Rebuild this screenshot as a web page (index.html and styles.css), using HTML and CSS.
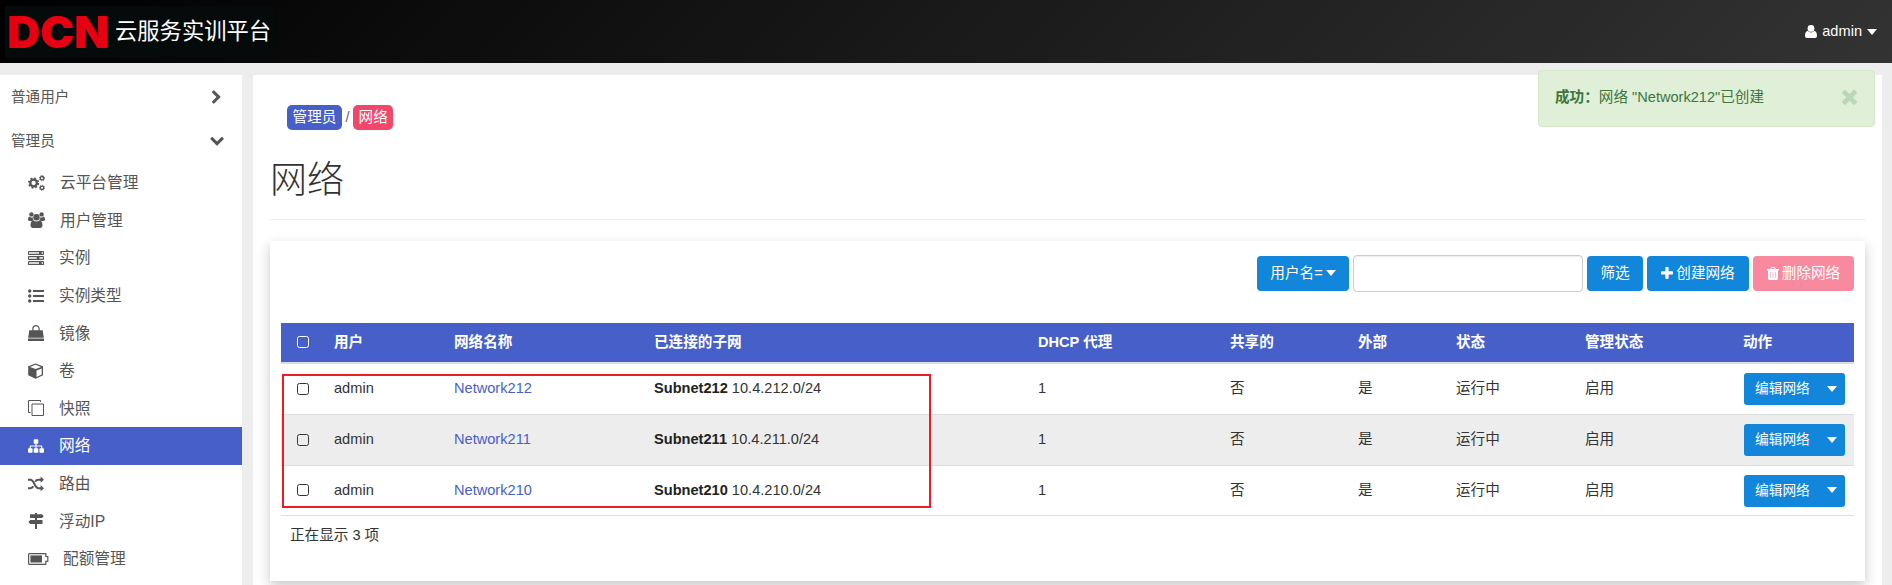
FILE: index.html
```html
<!DOCTYPE html>
<html lang="zh-CN">
<head>
<meta charset="utf-8">
<title>网络</title>
<link rel="stylesheet" href="styles.css">
</head>
<body>
<header class="topbar">
  <div class="brand"><span class="brand-mark">DCN</span><span class="brand-name">云服务实训平台</span></div>
  <div class="user-menu">
    <svg class="user-icon" viewBox="0 0 12 13"><circle cx="6" cy="3.4" r="3.4"/><path d="M2.6 5.8Q6 9.2 9.4 5.8Q12 6.6 12 11Q12 13 10 13H2Q0 13 0 11Q0 6.6 2.6 5.8z"/></svg>
    <span>admin</span><i class="caret"></i>
  </div>
</header>
<div class="page">
  <nav class="sidebar">
    <div class="group"><span>普通用户</span><svg class="chev" viewBox="0 0 1792 1792"><path d="M1363 877l-742 742q-19 19-45 19t-45-19l-166-166q-19-19-19-45t19-45l531-531-531-531q-19-19-19-45t19-45l166-166q19-19 45-19t45 19l742 742q19 19 19 45t-19 45z"/></svg></div>
    <div class="group"><span>管理员</span><svg class="chev down" viewBox="0 0 1792 1792"><path d="M1363 877l-742 742q-19 19-45 19t-45-19l-166-166q-19-19-19-45t19-45l531-531-531-531q-19-19-19-45t19-45l166-166q19-19 45-19t45 19l742 742q19 19 19 45t-19 45z"/></svg></div>
    <ul class="menu">
      <li><svg class="ico ico-17" viewBox="0 0 17 16"><g fill="none" stroke="currentColor"><circle cx="5.6" cy="8" r="3.3" stroke-width="2.3"/><circle cx="5.6" cy="8" r="4.8" stroke-width="1.7" stroke-dasharray="1.885"/><circle cx="14" cy="3.2" r="1.7" stroke-width="1.3"/><circle cx="14" cy="3.2" r="2.6" stroke-width="1" stroke-dasharray="1.02"/><circle cx="14" cy="12.8" r="1.7" stroke-width="1.3"/><circle cx="14" cy="12.8" r="2.6" stroke-width="1" stroke-dasharray="1.02"/></g></svg><span>云平台管理</span></li>
      <li><svg class="ico ico-17" viewBox="0 0 17 16"><circle cx="3.4" cy="2.4" r="2.2"/><circle cx="13.6" cy="2.4" r="2.2"/><circle cx="8.5" cy="5.2" r="3.2"/><path d="M1.2 4.6Q3.4 6.4 4.6 5Q4.6 7 5.6 8.1Q4.6 8.1 3.8 9.1H1.6Q0 9.1 0 7.6Q0 5 1.2 4.6zM15.8 4.6Q13.6 6.4 12.4 5Q12.4 7 11.4 8.1Q12.4 8.1 13.2 9.1H15.4Q17 9.1 17 7.6Q17 5 15.8 4.6zM5.4 8.3Q8.5 10.8 11.6 8.3Q14.5 8.8 14.5 13.6Q14.5 16 12.3 16H4.7Q2.5 16 2.5 13.6Q2.5 8.8 5.4 8.3z"/></svg><span>用户管理</span></li>
      <li><svg class="ico" viewBox="0 0 16 16"><path fill-opacity=".25" d="M0 1.500h16v3H0zM0 6.500h16v3H0zM0 11.500h16v3H0z"/><path fill="none" stroke="currentColor" stroke-width="1" d="M.5 1.500h15v3H.5zM.5 6.500h15v3H.5zM.5 11.500h15v3H.5z"/><path d="M11 2h2.600v2H11zM8.800 7h2.600v2H8.800zM11 12h2.600v2H11z"/></svg><span>实例</span></li>
      <li><svg class="ico" viewBox="0 0 16 16"><circle cx="1.7" cy="3" r="1.7"/><circle cx="1.7" cy="8" r="1.7"/><circle cx="1.7" cy="13" r="1.7"/><path d="M5 2h11v2H5zM5 7h11v2H5zM5 12h11v2H5z"/></svg><span>实例类型</span></li>
      <li><svg class="ico" viewBox="0 0 16 16"><path d="M1.3 5.2h13.4l1.1 7.500H.2zM0 13.400h16V16H0z"/><path fill="none" stroke="currentColor" stroke-width="1.200" d="M4.900 7.200V3.800a3.100 3.100 0 0 1 6.200 0v3.400"/></svg><span>镜像</span></li>
      <li><svg class="ico" viewBox="0 0 16 16"><path fill-rule="evenodd" d="M7.600.5L15 3.300V12.200L7.600 15.800L.2 12.200V3.300zM7.600 1.800L2 3.900L7.600 6L13.200 3.900zM8.500 7.500V14L13.700 11.400V5.400z"/></svg><span>卷</span></li>
      <li><svg class="ico" viewBox="0 0 16 16"><path fill="none" stroke="currentColor" stroke-width="1" d="M4 4h11.500v11.500H4zM2.500 12.500H.5V.5H12.500V2"/></svg><span>快照</span></li>
      <li class="active"><svg class="ico" viewBox="0 0 1792 1792"><path d="M1792 1248v320q0 40-28 68t-68 28h-320q-40 0-68-28t-28-68v-320q0-40 28-68t68-28h96v-192h-512v192h96q40 0 68 28t28 68v320q0 40-28 68t-68 28h-320q-40 0-68-28t-28-68v-320q0-40 28-68t68-28h96v-192h-512v192h96q40 0 68 28t28 68v320q0 40-28 68t-68 28h-320q-40 0-68-28t-28-68v-320q0-40 28-68t68-28h96v-192q0-52 38-90t90-38h512v-192h-96q-40 0-68-28t-28-68v-320q0-40 28-68t68-28h320q40 0 68 28t28 68v320q0 40-28 68t-68 28h-96v192h512q52 0 90 38t38 90v192h96q40 0 68 28t28 68z"/></svg><span>网络</span></li>
      <li><svg class="ico" viewBox="0 0 16 16"><path fill="none" stroke="currentColor" stroke-width="2" d="M0 3.700h2.200C6.800 3.700 6.200 12.200 10.400 12.200H13M0 12.200h2.200Q4.400 12.200 5.300 10.300M7.300 5.600Q8.200 3.700 10.400 3.700H13"/><path d="M12.600.6L16 3.700L12.600 6.800zM12.600 9.100L16 12.200L12.600 15.300z"/></svg><span>路由</span></li>
      <li><svg class="ico" viewBox="0 0 16 16"><path d="M7 0h2v1.300H7zM2 1.300h12l1.700 1.900L14 5.100H2zM7 5.100h2v2H7zM2.200 7.100H14.500v3.800H2.200L.4 9zM7 10.900h2V16H7z"/></svg><span>浮动IP</span></li>
      <li class="battery"><svg class="ico ico-21" viewBox="0 0 21 16"><path fill="none" stroke="currentColor" stroke-width="1.200" d="M1.600 2.600h16.200v2.900h2v4.800h-2v3H1.600q-1 0-1-1V3.600q0-1 1-1z"/><path d="M2.400 4.400h11.600v7.100H2.400z"/></svg><span>配额管理</span></li>
    </ul>
  </nav>
  <main class="content">
    <div class="crumbs"><a class="crumb blue">管理员</a><span class="sep">/</span><a class="crumb red">网络</a></div>
    <h1>网络</h1>
    <section class="card">
      <div class="toolbar">
        <button class="btn filter">用户名=<i class="caret"></i></button>
        <input class="search" type="text">
        <button class="btn go">筛选</button>
        <button class="btn create"><svg class="bi" viewBox="190 190 1412 1412"><path d="M1600 736v192q0 40-28 68t-68 28h-416v416q0 40-28 68t-68 28h-192q-40 0-68-28t-28-68v-416h-416q-40 0-68-28t-28-68v-192q0-40 28-68t68-28h416v-416q0-40 28-68t68-28h192q40 0 68 28t28 68v416h416q40 0 68 28t28 68z"/></svg>创建网络</button>
        <button class="btn delete"><svg class="bi" viewBox="0 0 12 13"><path fill-rule="evenodd" d="M0 2h3.200L4 .6Q4.300 0 5 0H7Q7.700 0 8 .6L8.800 2H12V3.500H11V11.600Q11 13 9.800 13H2.200Q1 13 1 11.600V3.500H0zM4.300 2H7.700L7.200 1H4.800zM3.200 5v6h.5V5zM5.750 5v6h.5V5zM8.300 5v6H8.800V5z"/></svg>删除网络</button>
      </div>
      <div class="table-wrap">
        <table>
          <colgroup><col class="c1"><col class="c2"><col class="c3"><col class="c4"><col class="c5"><col class="c6"><col class="c7"><col class="c8"><col class="c9"><col class="c10"></colgroup>
          <thead><tr><th><i class="box"></i></th><th>用户</th><th>网络名称</th><th>已连接的子网</th><th>DHCP 代理</th><th>共享的</th><th>外部</th><th>状态</th><th>管理状态</th><th>动作</th></tr></thead>
          <tbody>
            <tr><td><i class="box"></i></td><td>admin</td><td><a>Network212</a></td><td><b>Subnet212</b> 10.4.212.0/24</td><td>1</td><td>否</td><td>是</td><td>运行中</td><td>启用</td><td><div class="split"><span>编辑网络</span><i class="caret"></i></div></td></tr>
            <tr class="odd"><td><i class="box"></i></td><td>admin</td><td><a>Network211</a></td><td><b>Subnet211</b> 10.4.211.0/24</td><td>1</td><td>否</td><td>是</td><td>运行中</td><td>启用</td><td><div class="split"><span>编辑网络</span><i class="caret"></i></div></td></tr>
            <tr><td><i class="box"></i></td><td>admin</td><td><a>Network210</a></td><td><b>Subnet210</b> 10.4.210.0/24</td><td>1</td><td>否</td><td>是</td><td>运行中</td><td>启用</td><td><div class="split"><span>编辑网络</span><i class="caret"></i></div></td></tr>
          </tbody>
        </table>
        <div class="highlight"></div>
      </div>
      <p class="count">正在显示 3 项</p>
    </section>
  </main>
</div>
<div class="alert"><p><b>成功：</b>网络 "Network212"已创建</p><svg class="close" viewBox="300 380 1192 1192"><path d="M1490 1322q0 40-28 68l-136 136q-28 28-68 28t-68-28l-294-294-294 294q-28 28-68 28t-68-28l-136-136q-28-28-28-68t28-68l294-294-294-294q-28-28-28-68t28-68l136-136q28-28 68-28t68 28l294 294 294-294q28-28 68-28t68 28l136 136q28 28 28 68t-28 68l-294 294 294 294q28 28 28 68z"/></svg></div>
</body>
</html>
```
FILE: styles.css
```css
* { box-sizing: border-box; }
html, body { height: 100%; }
body {
  margin: 0;
  overflow: hidden;
  display: flex;
  flex-direction: column;
  background: #ededed;
  color: #333;
  font: 14.6px/21px "Liberation Sans", "Noto Sans CJK SC", sans-serif;
}
svg { display: block; fill: currentColor; flex: none; }
.caret {
  display: inline-block;
  border: 5px solid transparent;
  border-top: 6px solid currentColor;
  border-bottom: 0;
}

.topbar {
  flex: none;
  height: 63px;
  display: flex;
  justify-content: space-between;
  align-items: center;
  padding: 0 15px 0 5px;
  background: linear-gradient(135deg, #000, #333);
  color: #fff;
}
.brand {
  display: flex;
  align-items: center;
  width: 268px;
  height: 52px;
  padding-left: 2px;
  background: #050a0a;
}
.brand-mark {
  width: 108px;
  color: #e60012;
  font: 900 44px/52px Inter, sans-serif;
  transform: scaleX(1.035);
  transform-origin: left;
}
.brand-name { font-size: 22.3px; line-height: 53px; white-space: nowrap; }
.user-menu { display: flex; align-items: center; gap: 5px; }
.user-icon { width: 12px; height: 13px; }

.page { flex: 1; display: flex; gap: 11px; padding: 12px 10px 0 0; min-height: 0; }
.sidebar { width: 242px; background: #fff; color: #555; overflow: hidden; }
.group {
  display: flex;
  justify-content: space-between;
  align-items: center;
  height: 44px;
  padding: 0 18px 0 11px;
}
.chev { width: 15px; height: 15px; }
.down { transform: rotate(90deg); }
.menu { list-style: none; margin: 1px 0 0; padding: 0; font-size: 15.7px; }
.menu li {
  display: flex;
  align-items: center;
  gap: 15px;
  height: 37.6px;
  padding-left: 28px;
}
.menu li.active { background: #475fc8; color: #fff; }
.ico { width: 16px; height: 16px; }
.ico-17 { width: 17px; }
.ico-21 { width: 21px; }
.menu li.battery { gap: 14px; }

.content { flex: 1; min-width: 0; background: #fff; padding: 30px 17px 0; }
.crumbs { display: flex; height: 25px; padding-left: 17px; line-height: 24px; }
.crumb { padding: 0 5.6px; border-radius: 5px; color: #fff; }
.blue { background: #475fc8; }
.red { background: #f1476b; }
.sep { width: 11px; text-align: center; color: #666; }
h1 {
  height: 90px;
  margin: 0 0 21px;
  padding-top: 24px;
  border-bottom: 1px solid #eee;
  font-size: 37px;
  font-weight: 300;
  line-height: 54px;
}
.card {
  height: 340px;
  padding: 14px 11px 0;
  background: #fff;
  box-shadow: 0 5px 12px rgba(0, 0, 0, .22);
}
.toolbar { display: flex; justify-content: flex-end; align-items: center; gap: 4px; height: 37px; }
.btn {
  display: flex;
  align-items: center;
  justify-content: center;
  gap: 3px;
  height: 35px;
  padding: 0 0 1px;
  border: 0;
  border-radius: 4px;
  background: #1186db;
  color: #fff;
  font: inherit;
  white-space: nowrap;
}
.filter { width: 92px; }
.go { width: 56px; }
.create { width: 102px; }
.delete { width: 101px; background: #f8899f; }
.bi { width: 12px; height: 13px; }
.search {
  width: 230px;
  height: 37px;
  border: 1px solid #ccc;
  border-radius: 4px;
  box-shadow: inset 0 1px 1px rgba(0, 0, 0, .075);
}
.table-wrap { position: relative; margin-top: 31px; }
table { width: 100%; table-layout: fixed; border-collapse: separate; border-spacing: 0; }
.c1 { width: 45px; }
.c2 { width: 120px; }
.c3 { width: 200px; }
.c4 { width: 384px; }
.c5 { width: 192px; }
.c6 { width: 128px; }
.c7 { width: 98px; }
.c8 { width: 129px; }
.c9 { width: 158px; }
.c10 { width: 119px; }
th, td { padding: 0 8px; text-align: left; vertical-align: middle; white-space: nowrap; }
th { height: 41px; padding-bottom: 1px; background: #475fc8; color: #fff; border-bottom: 2px solid #ddd; }
td { height: 51px; padding-bottom: 1px; border-bottom: 1px solid #ddd; }
td:last-child { padding-bottom: 0; }
tbody tr:last-child td { height: 50px; }
.odd td { background: #ededed; }
td a { color: #475fc8; }
td b { color: #222; }
.box {
  display: block;
  width: 12px;
  height: 12px;
  margin-left: 8px;
  border: 1px solid currentColor;
  border-radius: 2.5px;
}
.split {
  display: flex;
  align-items: center;
  justify-content: space-between;
  width: 101px;
  height: 32px;
  margin-left: 1px;
  padding: 0 8px 1px 11px;
  border-radius: 3px;
  background: #1186db;
  color: #fff;
  font-size: 13.7px;
}
.highlight {
  position: absolute;
  left: 1px;
  top: 51px;
  width: 649px;
  height: 134px;
  border: 2px solid #ee1c25;
}
.count { margin: 9px 0 0 9px; }

.alert {
  position: absolute;
  left: 1538px;
  top: 70px;
  width: 337px;
  height: 57px;
  display: flex;
  align-items: center;
  justify-content: space-between;
  padding: 0 17px 2px 16px;
  border: 1px solid #d6e9c6;
  border-radius: 4px;
  background: #dfefd8;
  color: #3c763d;
}
.alert p { margin: 0; }
.close { width: 15px; height: 15px; color: #bcd7b8; }
```
